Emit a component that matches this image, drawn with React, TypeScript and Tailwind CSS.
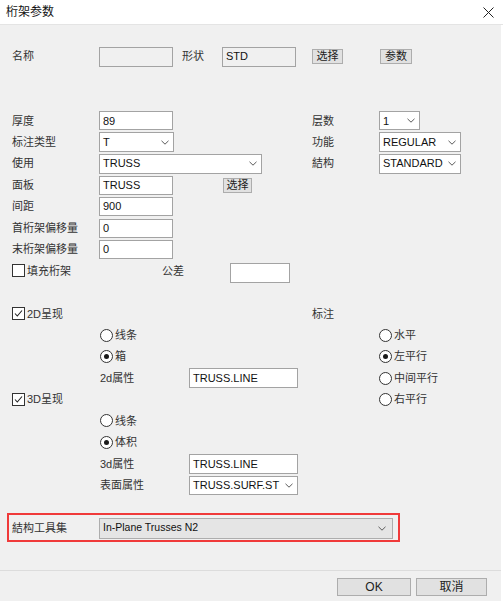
import React from "react";

function Chevron() {
  return (
    <svg width="8" height="5" viewBox="0 0 8 5" className="shrink-0">
      <path d="M0.5 0.8 L4 4.2 L7.5 0.8" fill="none" stroke="#5a5a5a" strokeWidth="1" />
    </svg>
  );
}

function Box({ className = "", children }: { className?: string; children?: React.ReactNode }) {
  return (
    <div className={`flex items-center border border-[#a3a3a3] pl-[3px] text-[11px] text-[#111] whitespace-nowrap overflow-hidden ${className}`}>
      {children}
    </div>
  );
}

function Select({ className = "", value }: { className?: string; value: string }) {
  return (
    <div className={`flex items-center justify-between bg-white border border-[#a3a3a3] pl-[3px] pr-[4px] text-[11px] text-[#111] whitespace-nowrap overflow-hidden ${className}`}>
      <span>{value}</span>
      <Chevron />
    </div>
  );
}

function Btn({ className = "", children }: { className?: string; children: React.ReactNode }) {
  return (
    <div className={`flex items-center justify-center bg-[#e1e1e1] border border-[#adadad] text-[11px] text-[#222] ${className}`}>
      {children}
    </div>
  );
}

function Check({ label }: { label: string }) {
  return (
    <div className="flex items-center gap-[2px]">
      <div className="w-[13px] h-[13px] border border-[#333] bg-white flex items-center justify-center">
        <svg width="11" height="11" viewBox="0 0 11 11">
          <path d="M2 5.5 L4.3 8 L9 2.5" fill="none" stroke="#222" strokeWidth="1.1" />
        </svg>
      </div>
      <span className="text-[11px] text-[#333]">{label}</span>
    </div>
  );
}

function EmptyCheck({ label }: { label: string }) {
  return (
    <div className="flex items-center gap-[2px]">
      <div className="w-[13px] h-[13px] border border-[#333] bg-white" />
      <span className="text-[11px] text-[#333]">{label}</span>
    </div>
  );
}

function Radio({ label, checked = false }: { label: string; checked?: boolean }) {
  return (
    <div className="flex items-center gap-[2px]">
      <div className="w-[13px] h-[13px] rounded-full border border-[#333] bg-white flex items-center justify-center">
        {checked && <div className="w-[5px] h-[5px] rounded-full bg-[#1a1a1a]" />}
      </div>
      <span className="text-[11px] text-[#333]">{label}</span>
    </div>
  );
}

function Row({ children, className = "" }: { children?: React.ReactNode; className?: string }) {
  return <div className={`h-[21.45px] flex items-center ${className}`}>{children}</div>;
}

function L({ className = "", children }: { className?: string; children: React.ReactNode }) {
  return <span className={`text-[11px] text-[#333] shrink-0 ${className}`}>{children}</span>;
}

export default function App() {
  return (
    <div className="w-[503px] h-[601px] flex flex-col bg-white font-['Liberation_Sans','Noto_Sans_CJK_SC',sans-serif] overflow-hidden">
      <div className="h-[25px] shrink-0 bg-white flex items-center justify-between pl-[6px] pr-[9px] border-b border-[#e4e4e4]">
        <span className="text-[12px] text-[#111]">桁架参数</span>
        <svg width="11" height="11" viewBox="0 0 11 11">
          <path d="M0.5 0.5 L10.5 10.5 M10.5 0.5 L0.5 10.5" stroke="#222" strokeWidth="1" />
        </svg>
      </div>
      <div className="flex-1 flex flex-col bg-[#f0f0f0] mr-[2px]">
        <div className="flex flex-col pl-[12px] pt-[20.8px]">
          <Row>
            <L className="w-[87px]">名称</L>
            <Box className="w-[74px] h-[20px] bg-[#f0f0f0]" />
            <L className="ml-[9px] w-[40px]">形状</L>
            <Box className="w-[74px] h-[20px] bg-[#f0f0f0]">STD</Box>
            <Btn className="ml-[16px] w-[31px] h-[15px]">选择</Btn>
            <Btn className="ml-[37px] w-[32px] h-[15px]">参数</Btn>
          </Row>
          <Row />
          <Row />
          <Row>
            <div className="w-[300px] flex items-center">
              <L className="w-[87px]">厚度</L>
              <Box className="w-[74px] h-[19px] bg-white">89</Box>
            </div>
            <L className="w-[67px]">层数</L>
            <Select className="w-[41px] h-[19px]" value="1" />
          </Row>
          <Row>
            <div className="w-[300px] flex items-center">
              <L className="w-[87px]">标注类型</L>
              <Select className="w-[75px] h-[20px]" value="T" />
            </div>
            <L className="w-[67px]">功能</L>
            <Select className="w-[82px] h-[20px]" value="REGULAR" />
          </Row>
          <Row>
            <div className="w-[300px] flex items-center">
              <L className="w-[87px]">使用</L>
              <Select className="w-[163px] h-[20px]" value="TRUSS" />
            </div>
            <L className="w-[67px]">結构</L>
            <Select className="w-[82px] h-[20px]" value="STANDARD" />
          </Row>
          <Row>
            <L className="w-[87px]">面板</L>
            <Box className="w-[74px] h-[19px] bg-white">TRUSS</Box>
            <Btn className="ml-[50px] w-[29px] h-[15px]">选择</Btn>
          </Row>
          <Row>
            <L className="w-[87px]">间距</L>
            <Box className="w-[74px] h-[19px] bg-white">900</Box>
          </Row>
          <Row>
            <L className="w-[87px]">首桁架偏移量</L>
            <Box className="w-[74px] h-[19px] bg-white">0</Box>
          </Row>
          <Row>
            <L className="w-[87px]">末桁架偏移量</L>
            <Box className="w-[74px] h-[19px] bg-white">0</Box>
          </Row>
          <Row>
            <div className="w-[150px]">
              <EmptyCheck label="填充桁架" />
            </div>
            <L className="w-[68px]">公差</L>
            <Box className="w-[60px] h-[20px] mt-[4px] bg-white" />
          </Row>
          <Row />
          <Row>
            <div className="w-[300px]">
              <Check label="2D呈现" />
            </div>
            <L>标注</L>
          </Row>
          <Row>
            <div className="w-[300px] pl-[88px]">
              <Radio label="线条" />
            </div>
            <div className="pl-[67px]">
              <Radio label="水平" />
            </div>
          </Row>
          <Row>
            <div className="w-[300px] pl-[88px]">
              <Radio label="箱" checked />
            </div>
            <div className="pl-[67px]">
              <Radio label="左平行" checked />
            </div>
          </Row>
          <Row>
            <div className="w-[300px] pl-[88px] flex items-center">
              <L className="w-[89px]">2d属性</L>
              <Box className="w-[109px] h-[20px] bg-white">TRUSS.LINE</Box>
            </div>
            <div className="pl-[67px]">
              <Radio label="中间平行" />
            </div>
          </Row>
          <Row>
            <div className="w-[300px]">
              <Check label="3D呈现" />
            </div>
            <div className="pl-[67px]">
              <Radio label="右平行" />
            </div>
          </Row>
          <Row>
            <div className="w-[300px] pl-[88px]">
              <Radio label="线条" />
            </div>
          </Row>
          <Row>
            <div className="w-[300px] pl-[88px]">
              <Radio label="体积" checked />
            </div>
          </Row>
          <Row>
            <div className="w-[300px] pl-[88px] flex items-center">
              <L className="w-[89px]">3d属性</L>
              <Box className="w-[109px] h-[20px] bg-white">TRUSS.LINE</Box>
            </div>
          </Row>
          <Row>
            <div className="w-[300px] pl-[88px] flex items-center">
              <L className="w-[89px]">表面属性</L>
              <Select className="w-[109px] h-[19px]" value="TRUSS.SURF.ST" />
            </div>
          </Row>
          <Row />
          <Row className="relative">
            <L className="w-[87px]">結构工具集</L>
            <div className="flex items-center justify-between w-[294px] h-[21px] bg-[#e5e5e5] border border-[#adadad] pl-[3px] pr-[6px] text-[10.5px] text-[#111]">
              <span>In-Plane Trusses N2</span>
              <Chevron />
            </div>
            <div className="absolute left-[-5px] top-[-4px] w-[393px] h-[29px] border-2 border-[#f03a3a]" />
          </Row>
        </div>
        <div className="flex-1" />
        <div className="h-[31px] shrink-0 border-t border-[#dcdcdc] flex justify-end items-start pt-[7px] pr-[14px] gap-[5px]">
          <Btn className="w-[74px] h-[18px] text-[12px]">OK</Btn>
          <Btn className="w-[71px] h-[18px] text-[12px]">取消</Btn>
        </div>
      </div>
    </div>
  );
}
